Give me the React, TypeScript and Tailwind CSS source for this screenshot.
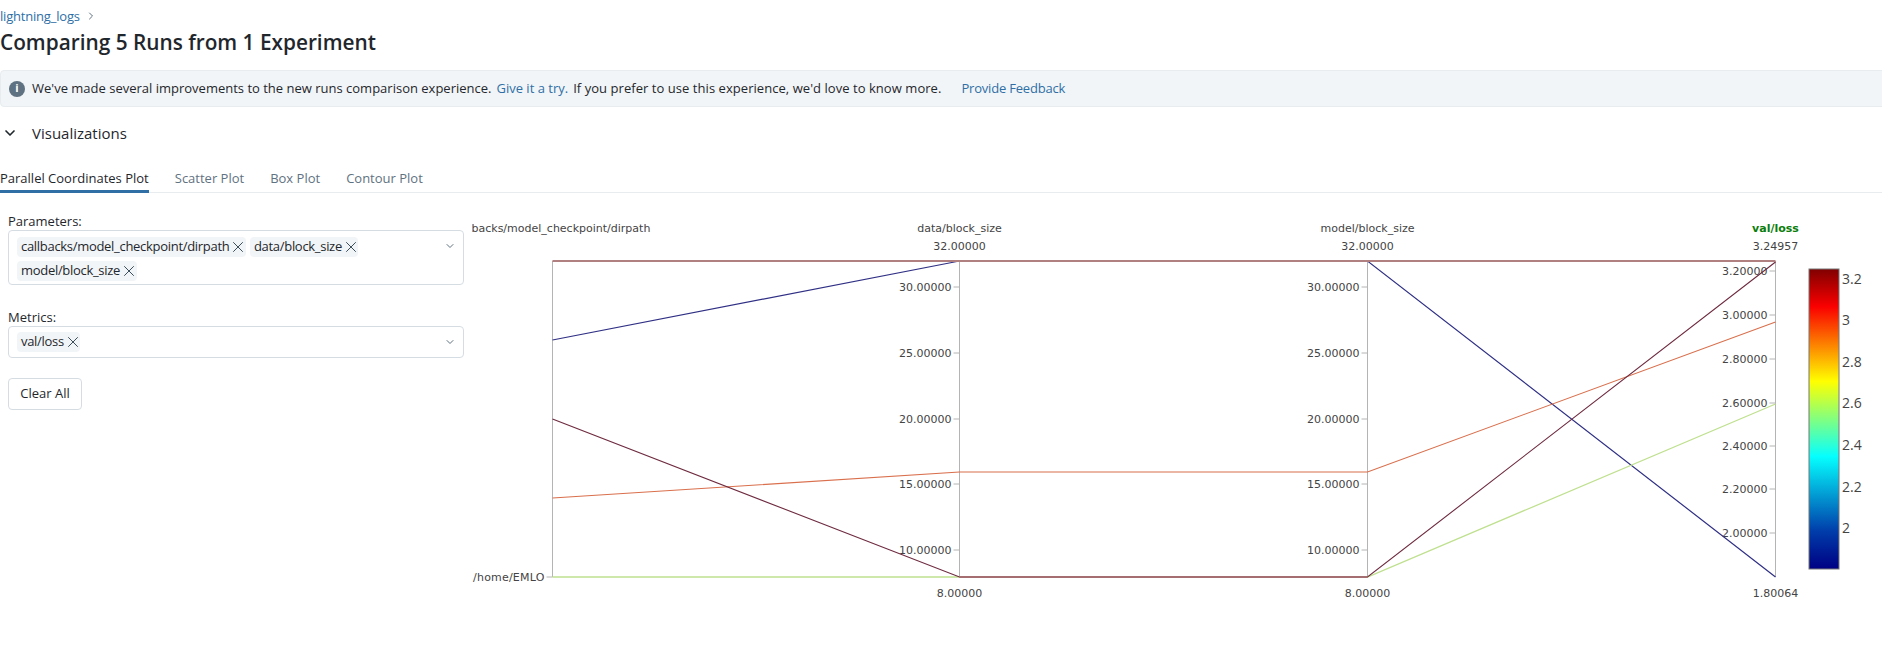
import { ChevronDown, ChevronRight, X } from "lucide-react";

const axes = [552.5, 959.5, 1367.5, 1775.5];
const top = 261;
const bottom = 577;

// drawn in this order so the brown top line sits over the blue one
const runs = [
  { color: "#2f2f85", width: 1.2, ys: [340, 261, 261, 577] },
  { color: "#d96f4c", width: 1.1, ys: [498, 472, 472, 322] },
  { color: "#bfe08f", width: 1.3, ys: [577, 577, 577, 404] },
  { color: "#6e2a3f", width: 1.1, ys: [419, 577, 577, 262] },
  { color: "#b07f80", width: 2, ys: [261, 261, 261, 261] },
];

const sizeTicks = [
  { label: "30.00000", y: 287 },
  { label: "25.00000", y: 353 },
  { label: "20.00000", y: 419 },
  { label: "15.00000", y: 484 },
  { label: "10.00000", y: 550 },
];

const lossTicks = [
  { label: "3.20000", y: 271 },
  { label: "3.00000", y: 315 },
  { label: "2.80000", y: 359 },
  { label: "2.60000", y: 403 },
  { label: "2.40000", y: 446 },
  { label: "2.20000", y: 489 },
  { label: "2.00000", y: 533 },
];

const colorbarTicks = [
  { label: "3.2", y: 279 },
  { label: "3", y: 320 },
  { label: "2.8", y: 362 },
  { label: "2.6", y: 403 },
  { label: "2.4", y: 445 },
  { label: "2.2", y: 487 },
  { label: "2", y: 528 },
];

const tabs = ["Parallel Coordinates Plot", "Scatter Plot", "Box Plot", "Contour Plot"];

function Chip({ label }: { label: string }) {
  return (
    <span className="flex h-5 items-center rounded-[4px] bg-[#f2f5f7] pl-1 text-[13px] tracking-[-0.3px] text-[#1f272d]">
      {label}
      <X size={18} strokeWidth={1.3} className="-mr-[1.5px] text-[#374955]" />
    </span>
  );
}

function Axis({ x, ticks }: { x: number; ticks: { label: string; y: number }[] }) {
  return (
    <g>
      <line x1={x} x2={x} y1={top} y2={bottom} stroke="#b4b4b4" strokeWidth={1} />
      {ticks.map((t) => (
        <g key={t.label}>
          <line x1={x - 6} x2={x} y1={t.y} y2={t.y} stroke="#b4b4b4" strokeWidth={1} />
          <text x={x - 8} y={t.y + 4} textAnchor="end" fontSize={11} fill="#444">
            {t.label}
          </text>
        </g>
      ))}
    </g>
  );
}

function Plot() {
  return (
    <svg width={1411} height={469} className="mt-[7px] block shrink-0" style={{ fontFamily: "DejaVu Sans, sans-serif" }}>
      <defs>
        <linearGradient id="jet" x1="0" y1="1" x2="0" y2="0">
          <stop offset="0" stopColor="rgb(0,0,131)" />
          <stop offset="0.125" stopColor="rgb(0,60,170)" />
          <stop offset="0.375" stopColor="rgb(5,255,255)" />
          <stop offset="0.625" stopColor="rgb(255,255,0)" />
          <stop offset="0.875" stopColor="rgb(250,0,0)" />
          <stop offset="1" stopColor="rgb(128,0,0)" />
        </linearGradient>
      </defs>
      <g transform="translate(-471,-200)">
        <Axis x={axes[0]} ticks={[]} />
        <line x1={axes[0] - 6} x2={axes[0]} y1={bottom} y2={bottom} stroke="#b4b4b4" />
        <text x={axes[0] - 8} y={bottom + 4} textAnchor="end" fontSize={11} fill="#444" letterSpacing={0.2}>
          /home/EMLO
        </text>
        <Axis x={axes[1]} ticks={sizeTicks} />
        <Axis x={axes[2]} ticks={sizeTicks} />
        <Axis x={axes[3]} ticks={lossTicks} />

        {runs.map((r) => (
          <polyline
            key={r.color}
            points={r.ys.map((y, i) => `${axes[i]},${y}`).join(" ")}
            fill="none"
            stroke={r.color}
            strokeWidth={r.width}
          />
        ))}
        <line x1={axes[1]} x2={axes[2]} y1={bottom} y2={bottom} stroke="#a56f72" strokeWidth={2} />

        <text x={471.5} y={232} fontSize={11} fill="#444">
          backs/model_checkpoint/dirpath
        </text>
        <g fontSize={11} fill="#444" textAnchor="middle">
          <text x={axes[1]} y={232}>data/block_size</text>
          <text x={axes[2]} y={232}>model/block_size</text>
          <text x={axes[3]} y={232} fill="#0a7d0a" fontWeight={700}>val/loss</text>
          <text x={axes[1]} y={249.5}>32.00000</text>
          <text x={axes[2]} y={249.5}>32.00000</text>
          <text x={axes[3]} y={249.5}>3.24957</text>
          <text x={axes[1]} y={597}>8.00000</text>
          <text x={axes[2]} y={597}>8.00000</text>
          <text x={axes[3]} y={597}>1.80064</text>
        </g>

        <rect x={1809} y={269} width={30} height={300} fill="url(#jet)" stroke="#777" strokeWidth={1} />
        {colorbarTicks.map((t) => (
          <text key={t.label} x={1842} y={t.y + 5} fontSize={14} fill="#444" style={{ fontFamily: "Open Sans, sans-serif" }}>
            {t.label}
          </text>
        ))}
      </g>
    </svg>
  );
}

export default function App() {
  return (
    <div className="h-[669px] w-[1882px] overflow-hidden bg-white font-['Open_Sans',sans-serif] text-[13px] text-[#1f272d]">
      <div className="flex h-[20px] translate-y-[6px] items-center gap-[5px]">
        <span className="leading-5 tracking-[-0.2px] text-[#2f6fa6]">lightning_logs</span>
        <ChevronRight size={12} className="text-[#5f7281]" />
      </div>
      <h1 className="mt-[8px] text-[20.8px] font-semibold leading-[28px]">Comparing 5 Runs from 1 Experiment</h1>

      <div className="mt-[14px] -mr-2 flex h-[37px] items-center rounded-[4px] border border-[#e8ecef] bg-[#f2f5f7] pl-[8px]">
        <span className="flex h-4 w-4 items-center justify-center rounded-full bg-[#5f7281] text-[11px] font-bold text-white">
          i
        </span>
        <span className="ml-[7px]">We've made several improvements to the new runs comparison experience.</span>
        <span className="ml-[5px] text-[#2f6fa6]">Give it a try.</span>
        <span className="ml-[5px] tracking-[0.05px]">If you prefer to use this experience, we'd love to know more.</span>
        <span className="ml-[20px] tracking-[-0.2px] text-[#2f6fa6]">Provide Feedback</span>
      </div>

      <div className="mt-[14px] flex h-[24px] items-center pl-[2px]">
        <ChevronDown size={16} strokeWidth={2.5} className="text-[#1f272d]" />
        <span className="ml-[14px] text-[15px]">Visualizations</span>
      </div>

      <div className="mt-[22px] flex h-[26px] gap-[26px] border-b border-[#e8ecef]">
        {tabs.map((tab, i) => (
          <span
            key={tab}
            className={i === 0 ? "h-[26px] border-b-[3px] border-[#2f6fa6] leading-[22px]" : "leading-[22px] text-[#5f7281]"}
          >
            {tab}
          </span>
        ))}
      </div>

      <div className="flex">
        <div className="ml-2 mr-[7px] w-[456px] shrink-0">
          <div className="mt-[19px] leading-[18px]">Parameters:</div>
          <div className="flex h-[55px] justify-between rounded-[4px] border border-[#d6dde2] pl-[8px] pr-[7.5px]">
            <div className="flex flex-wrap content-start gap-x-1 gap-y-1 pt-[6px]">
              <Chip label="callbacks/model_checkpoint/dirpath" />
              <Chip label="data/block_size" />
              <Chip label="model/block_size" />
            </div>
            <ChevronDown size={12} strokeWidth={2} className="mt-[9px] shrink-0 text-[#5f7281]" />
          </div>
          <div className="mt-[23px] leading-[18px]">Metrics:</div>
          <div className="flex h-8 items-center justify-between rounded-[4px] border border-[#d6dde2] pl-[8px] pr-[7.5px]">
            <Chip label="val/loss" />
            <ChevronDown size={12} strokeWidth={2} className="text-[#5f7281]" />
          </div>
          <button className="mt-[20px] h-8 w-[74px] rounded-[4px] border border-[#d6dde2] bg-white">Clear All</button>
        </div>
        <Plot />
      </div>
    </div>
  );
}
